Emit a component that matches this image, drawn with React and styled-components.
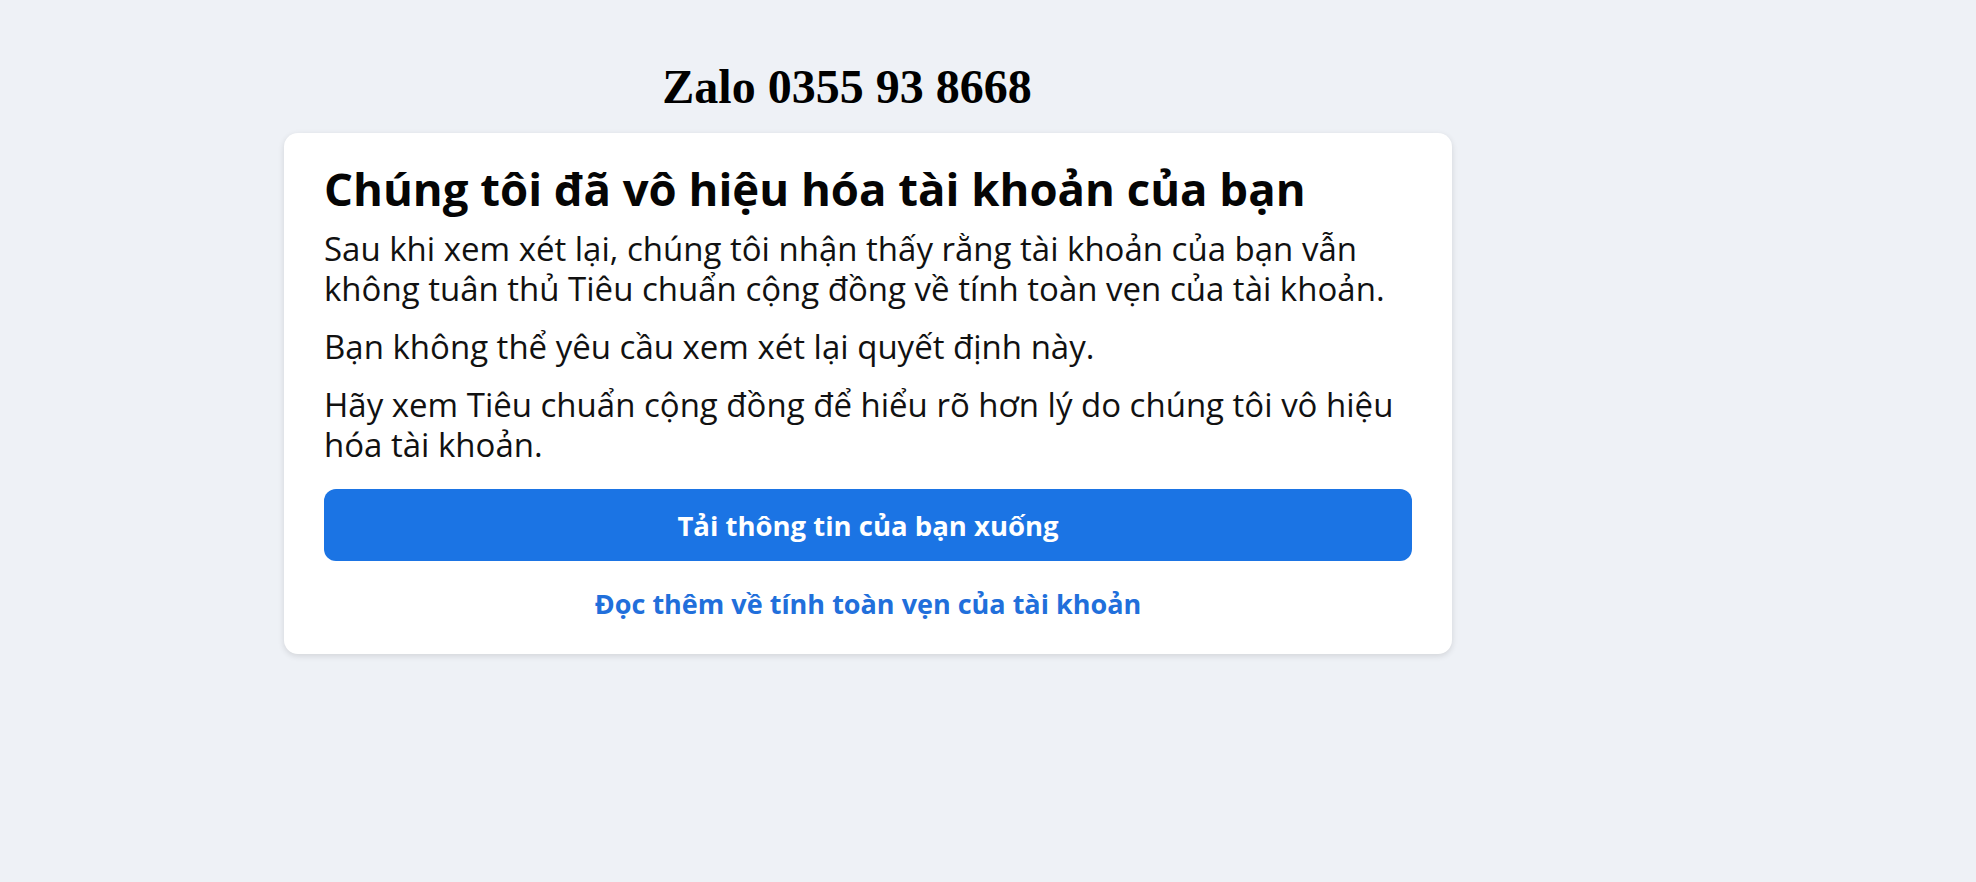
import React from 'react';
import styled, { createGlobalStyle } from 'styled-components';

const GlobalStyle = createGlobalStyle`
  html, body {
    margin: 0;
    padding: 0;
    background: #eef1f6;
  }
  body {
    font-family: 'Open Sans', 'Noto Sans', sans-serif;
  }
`;

const Page = styled.div`
  width: 1168px;
  margin-left: 284px;
  padding-top: 60px;
  padding-bottom: 40px;
`;

const Contact = styled.div`
  font-family: 'Liberation Serif', 'Times New Roman', serif;
  font-weight: bold;
  font-size: 48px;
  line-height: 53px;
  color: #000;
  text-align: center;
  padding-right: 42px;
  margin-bottom: 20px;
`;

const Card = styled.div`
  background: #fff;
  border-radius: 14px;
  box-shadow: 0 2px 6px rgba(0, 0, 0, 0.12);
  padding: 31px 40px 30px;
  display: flex;
  flex-direction: column;
`;

const Heading = styled.h1`
  margin: 0 0 17px;
  font-size: 45.5px;
  line-height: 48px;
  font-weight: 700;
  color: #050505;
`;

const Text = styled.p`
  margin: 0 0 18px;
  font-size: 33px;
  line-height: 40px;
  color: #111;
  &:last-of-type { margin-bottom: 0; }
`;

const PrimaryButton = styled.button`
  margin-top: 24px;
  height: 72px;
  padding: 1px 0 0;
  border: none;
  border-radius: 12px;
  background: #1b74e4;
  color: #fff;
  font-family: inherit;
  font-size: 27.5px;
  font-weight: 700;
  cursor: pointer;
`;

const Link = styled.a`
  margin-top: 23px;
  align-self: center;
  font-size: 27px;
  line-height: 40px;
  font-weight: 700;
  color: #216fdb;
  text-decoration: none;
  cursor: pointer;
`;

export default function App() {
  return (
    <>
      <GlobalStyle />
      <Page>
        <Contact>Zalo 0355 93 8668</Contact>
        <Card>
          <Heading>Chúng tôi đã vô hiệu hóa tài khoản của bạn</Heading>
          <Text>
            Sau khi xem xét lại, chúng tôi nhận thấy rằng tài khoản của bạn vẫn không tuân thủ
            Tiêu chuẩn cộng đồng về tính toàn vẹn của tài khoản.
          </Text>
          <Text>Bạn không thể yêu cầu xem xét lại quyết định này.</Text>
          <Text>
            Hãy xem Tiêu chuẩn cộng đồng để hiểu rõ hơn lý do chúng tôi vô hiệu hóa tài khoản.
          </Text>
          <PrimaryButton>Tải thông tin của bạn xuống</PrimaryButton>
          <Link>Đọc thêm về tính toàn vẹn của tài khoản</Link>
        </Card>
      </Page>
    </>
  );
}
